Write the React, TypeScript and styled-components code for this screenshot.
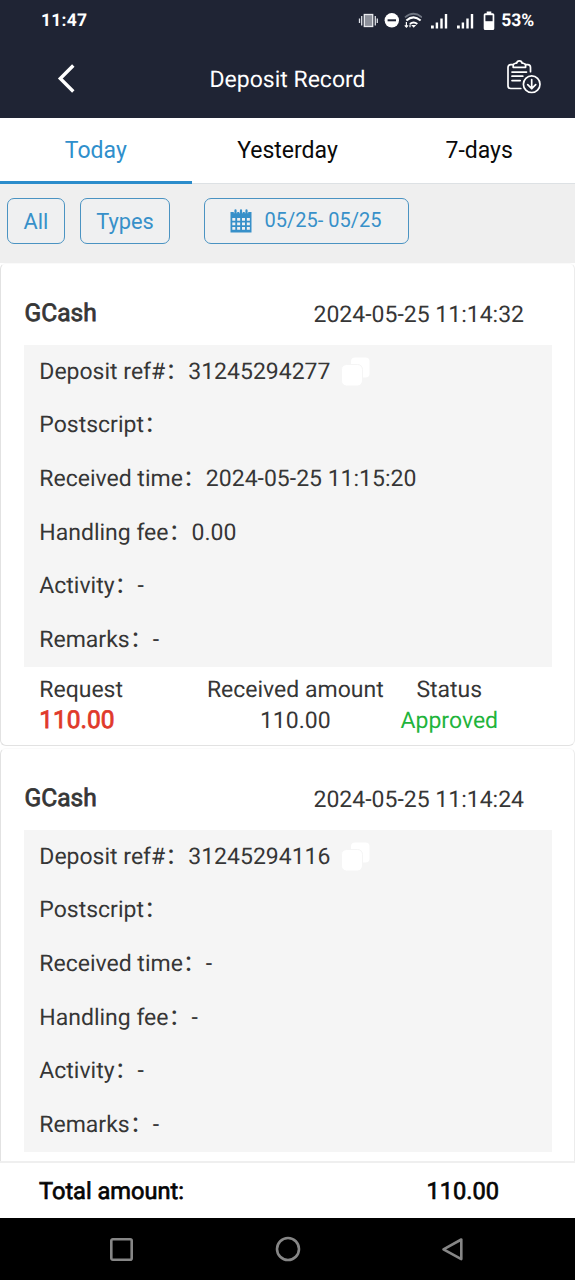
import React from "react";
import styled, { createGlobalStyle } from "styled-components";

const GlobalStyle = createGlobalStyle`
  * { box-sizing: border-box; }
  body { margin: 0; background: #fff; }
`;

const Screen = styled.main`
  display: flex;
  flex-direction: column;
  width: 575px;
  height: 1280px;
  overflow: hidden;
  background: #fff;
  color: #363636;
  font-family: Roboto, "Noto Sans CJK SC", sans-serif;
  font-size: 23px;
  text-rendering: geometricPrecision;
  white-space: nowrap;
  svg { display: block; flex: none; }
`;

const TopArea = styled.div`
  flex: none;
  height: 118px;
  background: #1f2434;
  color: #fff;
`;

const StatusBar = styled.div`
  display: flex;
  align-items: center;
  justify-content: space-between;
  height: 41px;
  padding: 1px 41px 0 41px;
  font-size: 17.5px;
  font-weight: 700;
  letter-spacing: 0.25px;
`;

const StatusIcons = styled.div`
  display: flex;
  align-items: center;
`;

const Percent = styled.span`
  margin-left: 6px;
  letter-spacing: -0.1px;
`;

const TitleBar = styled.header`
  display: grid;
  grid-template-columns: 132px 1fr 132px;
  align-items: center;
  height: 74px;
`;

const Title = styled.h1`
  margin: 2px 0 0;
  text-align: center;
  font-size: 23px;
  font-weight: 400;
`;

const IconButton = styled.button<{ $indent: number }>`
  display: block;
  padding: 0 0 0 ${(p) => p.$indent}px;
  border: 0;
  background: none;
  color: inherit;
`;

const Tabs = styled.nav`
  display: grid;
  grid-template-columns: repeat(3, 1fr);
  flex: none;
  height: 66px;
`;

const Tab = styled.button<{ $active?: boolean }>`
  padding: 0;
  border: 0;
  border-bottom: ${(p) => (p.$active ? "3px solid #2b8ccb" : "1px solid #dde1e4")};
  padding: ${(p) => (p.$active ? "2px 0 0" : "2px 0 2px")};
  background: none;
  color: ${(p) => (p.$active ? "#2f8fcc" : "#0a0a0a")};
  font: inherit;
`;

const Filters = styled.div`
  display: flex;
  flex: none;
  height: 79px;
  padding: 14px 7px;
  background: #efefef;
`;

const FilterButton = styled.button<{ $width: number; $gap?: number }>`
  display: flex;
  align-items: center;
  justify-content: center;
  width: ${(p) => p.$width}px;
  height: 46px;
  margin-left: ${(p) => p.$gap || 0}px;
  padding: 0;
  border: 1px solid #4a93c2;
  border-radius: 7px;
  background: #eff0f1;
  color: #3790c9;
  font: inherit;
  font-size: 21.8px;
`;

const DateRange = styled.span`
  margin: 0 2px 2px 13px;
  font-size: 20px;
`;

const Records = styled.section`
  flex: none;
  height: 898px;
  overflow: hidden;
`;

const Card = styled.article`
  height: 483px;
  margin-bottom: 2px;
  padding: 0 22px 0 23px;
  border: 1px solid #e2e2e2;
  border-top-color: #fafafa;
  border-right-color: #ececec;
  border-radius: 6px;
`;

const CardHeader = styled.div`
  display: flex;
  align-items: center;
  justify-content: space-between;
  height: 81px;
  padding: 19px 28px 0 0;
`;

const Method = styled.h2`
  margin: 0 0 3px 0.6px;
  font-size: 24.5px;
  font-weight: 400;
  -webkit-text-stroke: 0.8px currentColor;
`;

const Details = styled.div`
  height: 322px;
  padding-left: 15.3px;
  background: #f5f5f5;
`;

const DetailRow = styled.div`
  display: flex;
  align-items: center;
  height: calc(100% / 6);
  padding-bottom: 6px;
  white-space: pre;
`;

const CopyIcon = styled.svg`
  margin: 6px 0 0 11px;
`;

const Summary = styled.div`
  display: flex;
  padding: 8px 0 0 15.3px;
  line-height: 30.5px;
`;

const Figure = styled.div<{ $width: number; $align?: string }>`
  width: ${(p) => p.$width}px;
  text-align: ${(p) => p.$align || "center"};
`;

const Requested = styled.div`
  margin-top: -1px;
  color: #e0392a;
  font-size: 24.5px;
  -webkit-text-stroke: 0.8px currentColor;
`;

const Approved = styled.div`
  color: #1fb43c;
`;

const TotalBar = styled.footer`
  display: flex;
  align-items: center;
  justify-content: space-between;
  flex: none;
  height: 57px;
  padding: 0 76px 0 39px;
  border-top: 2px solid #efefef;
  color: #050505;
  font-size: 23.6px;
  -webkit-text-stroke: 0.7px currentColor;
`;

const AndroidNav = styled.div`
  display: flex;
  flex: 1;
  align-items: center;
  justify-content: space-between;
  padding: 0 111px 0 109px;
  background: #000;
`;

const SignalIcon = styled.svg`
  margin-left: 9px;
`;

const BatteryIcon = styled.svg`
  margin-left: 9px;
`;

const Signal = () => (
  <SignalIcon width="17" height="16" viewBox="0 0 17 16" fill="#fff">
    <rect x="0" y="12.5" width="2.8" height="3" />
    <rect x="4.7" y="9.5" width="2.4" height="6" />
    <rect x="9.3" y="5.5" width="2.4" height="10" />
    <rect x="13.8" y="1" width="2.4" height="14.5" />
  </SignalIcon>
);

const StatusGlyphs = () => (
  <>
    <svg width="64" height="20" viewBox="0 0 64 20" fill="none">
      <rect x="6.3" y="3.5" width="8.4" height="12" fill="#8d919b" stroke="#e8eaee" strokeWidth="1.3" />
      <path d="M3.7 5v9.5M1.5 7.5V12M17.3 5v9.5M19.3 7.5V12" stroke="#dfe2e7" strokeWidth="1.3" />
      <circle cx="33.8" cy="9.3" r="7.2" fill="#fff" />
      <path d="M29.6 9.3H38" stroke="#1f2434" strokeWidth="2" />
      <path d="M47 6.4Q55.5-1 64 6.4" stroke="#6e7480" strokeWidth="1.8" />
      <path d="M48.4 9.6Q55.6 3.2 62.6 9.6M51.9 13Q55.6 9.9 59.3 13" stroke="#fff" strokeWidth="2" />
      <path d="M53.2 14h5l-2.5 2.8z" fill="#fff" />
      <path d="M48.4 11v5m-1.6-1.6 1.6 1.8 1.6-1.8M52 16.2v-2.6" stroke="#fff" strokeWidth="1.2" />
    </svg>
    <Signal />
    <Signal />
    <BatteryIcon width="12" height="20" viewBox="0 0 12 20">
      <path d="M3.7.5h4.6v1.7h1.5q1.5 0 1.5 1.5v13.7q0 1.5-1.5 1.5H2.2q-1.5 0-1.5-1.5V3.7q0-1.5 1.5-1.5h1.5z" fill="#fff" />
      <path d="M2.4 4.2h7.2v6H2.4z" fill="#1f2434" />
    </BatteryIcon>
  </>
);

const ClipboardDownload = () => (
  <svg width="36" height="36" viewBox="0 0 36 36" fill="none" stroke="#fff" strokeWidth="1.7" strokeLinecap="round" strokeLinejoin="round">
    <path d="M7.2 4.7H4.8Q2 4.7 2 7.5v18.2q0 2.8 2.8 2.8h10M19.5 4.7h2.2q2.8 0 2.8 2.8v4.2" />
    <path d="M7.2 7.3V5.2q0-1.4 2.3-2h1.2Q11 .9 13.4.9T16 3.2h1.2q2.4.6 2.4 2v2.1z" />
    <path d="M6 12.1h14.5M6 16.2h10.8M6 20.6h8.2" />
    <circle cx="25.7" cy="24.2" r="8.3" />
    <path d="M25.7 19.5v9.2m-4-4 4 4 4-4" />
  </svg>
);

const CalendarIcon = () => (
  <svg width="22" height="24" viewBox="0 0 22 24">
    <path d="M.5 3h21v20.5H.5z" fill="#3790c9" />
    <path d="M5.5 1v3.2M11 1v3.2M16.5 1v3.2" stroke="#eff0f1" strokeWidth="3.4" />
    <path d="M5.5 1.4v3.3M11 1.4v3.3M16.5 1.4v3.3" stroke="#3790c9" strokeWidth="2.2" strokeLinecap="round" />
    <path
      d="M2.3 10.4h17.6M2.3 14.9h17.6M2.3 19.4h17.6"
      stroke="#eff0f1"
      strokeWidth="2.8"
      strokeDasharray="3 1.85"
    />
  </svg>
);

type Deposit = {
  method: string;
  created: string;
  reference: string;
  received: string;
  fee: string;
  settled?: { request: string; amount: string; status: string };
};

const deposits: Deposit[] = [
  {
    method: "GCash",
    created: "2024-05-25 11:14:32",
    reference: "31245294277",
    received: "2024-05-25 11:15:20",
    fee: "0.00",
    settled: { request: "110.00", amount: "110.00", status: "Approved" },
  },
  {
    method: "GCash",
    created: "2024-05-25 11:14:24",
    reference: "31245294116",
    received: "-",
    fee: "-",
  },
];

const DepositCard = ({ deposit }: { deposit: Deposit }) => (
  <Card>
    <CardHeader>
      <Method>{deposit.method}</Method>
      <time>{deposit.created}</time>
    </CardHeader>
    <Details>
      <DetailRow>
        Deposit ref#：{deposit.reference}
        <CopyIcon width="30" height="30" viewBox="0 0 30 30" fill="#fff">
          <rect x="10" y="0.5" width="18.5" height="20" rx="4" />
          <rect x="0.5" y="7.5" width="21" height="21.5" rx="5" stroke="#f5f5f5" />
        </CopyIcon>
      </DetailRow>
      <DetailRow>Postscript：</DetailRow>
      <DetailRow>Received time：{deposit.received}</DetailRow>
      <DetailRow>Handling fee：{deposit.fee}</DetailRow>
      <DetailRow>Activity：-</DetailRow>
      <DetailRow>Remarks：-</DetailRow>
    </Details>
    {deposit.settled && (
      <Summary>
        <Figure $width={156} $align="left">
          Request
          <Requested>{deposit.settled.request}</Requested>
        </Figure>
        <Figure $width={200}>
          Received amount
          <div>{deposit.settled.amount}</div>
        </Figure>
        <Figure $width={108}>
          Status
          <Approved>{deposit.settled.status}</Approved>
        </Figure>
      </Summary>
    )}
  </Card>
);

export default function App() {
  return (
    <>
      <GlobalStyle />
      <Screen>
        <TopArea>
          <StatusBar>
            <span>11:47</span>
            <StatusIcons>
              <StatusGlyphs />
              <Percent>53%</Percent>
            </StatusIcons>
          </StatusBar>
          <TitleBar>
            <IconButton $indent={57} aria-label="Back">
              <svg width="19" height="30" viewBox="0 0 19 30" fill="none" stroke="#fff" strokeWidth="3.4">
                <path d="M16.3 2.5 3.3 15.5l13 13" />
              </svg>
            </IconButton>
            <Title>Deposit Record</Title>
            <IconButton $indent={63} aria-label="Export records">
              <ClipboardDownload />
            </IconButton>
          </TitleBar>
        </TopArea>
        <Tabs>
          <Tab $active>Today</Tab>
          <Tab>Yesterday</Tab>
          <Tab>7-days</Tab>
        </Tabs>
        <Filters>
          <FilterButton $width={58}>All</FilterButton>
          <FilterButton $width={90} $gap={15}>Types</FilterButton>
          <FilterButton $width={205} $gap={34}>
            <CalendarIcon />
            <DateRange>05/25- 05/25</DateRange>
          </FilterButton>
        </Filters>
        <Records>
          {deposits.map((d) => (
            <DepositCard key={d.reference} deposit={d} />
          ))}
        </Records>
        <TotalBar>
          <span>Total amount:</span>
          <span>110.00</span>
        </TotalBar>
        <AndroidNav>
          <svg width="25" height="25" viewBox="0 0 25 25" fill="none" stroke="#868686" strokeWidth="2.6">
            <rect x="2.3" y="2.3" width="20.4" height="20.4" rx="1.5" />
          </svg>
          <svg width="26" height="26" viewBox="0 0 26 26" fill="none" stroke="#868686" strokeWidth="2.6">
            <circle cx="13" cy="13" r="11" />
          </svg>
          <svg width="23" height="25" viewBox="0 0 23 25" fill="none" stroke="#868686" strokeWidth="2.6" strokeLinejoin="round">
            <path d="M20.3 2.5v19.6L2.5 12.3z" />
          </svg>
        </AndroidNav>
      </Screen>
    </>
  );
}
